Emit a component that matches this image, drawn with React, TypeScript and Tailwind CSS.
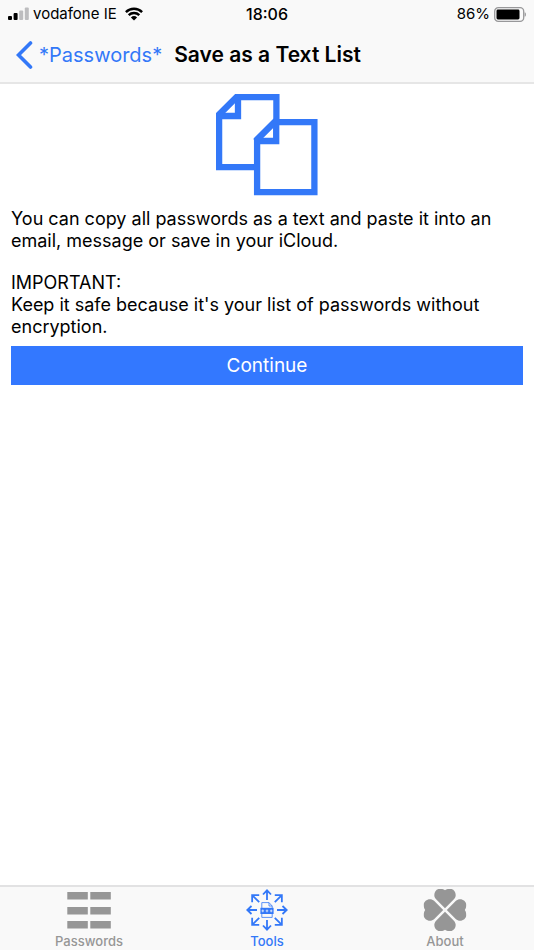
import type { ReactNode } from 'react';

function SignalBars() {
  return (
    <svg width="21" height="14" viewBox="0 0 21 14" aria-hidden>
      <rect x="0" y="9" width="4" height="4" rx="1" fill="#000" />
      <rect x="5.6" y="6" width="4" height="7" rx="1" fill="#000" />
      <rect x="11.2" y="3.5" width="4" height="9.5" rx="1" fill="#bdbdbf" />
      <rect x="16.8" y="0.5" width="4" height="12.5" rx="1" fill="#bdbdbf" />
    </svg>
  );
}

function Wifi() {
  return (
    <svg width="18" height="14" viewBox="0 0 18 14" aria-hidden>
      <g fill="none" stroke="#000" strokeWidth="2.4">
        <path d="M0.9 5.1A11.6 11.6 0 0 1 17.1 5.1" />
        <path d="M3.7 8.1A7.6 7.6 0 0 1 14.3 8.1" />
      </g>
      <path d="M5.9 10.4A4.5 4.5 0 0 1 12.1 10.4L9 13.6Z" fill="#000" />
    </svg>
  );
}

function Battery() {
  return (
    <svg width="32" height="15" viewBox="0 0 32 15" aria-hidden>
      <rect x="0.7" y="0.7" width="29" height="13.6" rx="3.6" fill="none" stroke="#98989a" strokeWidth="1.3" />
      <rect x="2.5" y="2.5" width="23" height="10" rx="1.4" fill="#000" />
      <path d="M30.6 5.2C32.4 5.7 32.4 9.3 30.6 9.8Z" fill="#98989a" />
    </svg>
  );
}

function BackChevron() {
  return (
    <svg width="17" height="28" viewBox="0 0 17 28" aria-hidden>
      <path d="M14.5 2L2.5 14L14.5 26" fill="none" stroke="currentColor" strokeWidth="3.6" strokeLinecap="round" />
    </svg>
  );
}

function CopyPages() {
  return (
    <svg width="102" height="102" viewBox="0 0 102 102" aria-hidden>
      <g fill="#fff" stroke="#3378f8" strokeWidth="6.3">
        <path d="M3.1 20.6L20.6 3.1H60.4V73.1H3.1Z" />
        <path d="M22 3V22H3" />
        <path d="M41.1 45.6L58.6 28.1H98.4V98.1H41.1Z" />
        <path d="M60.2 28V47H41" />
      </g>
      {/* The fold fills cover the inner half of the diagonals, so draw those again */}
      <path d="M1.5 22.2L22.2 1.5M39.5 47.2L60.2 26.5" stroke="#3378f8" strokeWidth="6.3" clipPath="url(#pages)" />
      <clipPath id="pages">
        <path d="M0 19L19 0H64V77H0ZM38 44L57 25H102V102H38Z" />
      </clipPath>
    </svg>
  );
}

function ListIcon() {
  return (
    <svg width="44" height="42" viewBox="0 0 44 42" fill="currentColor" aria-hidden>
      {[3, 18, 32].map((y) => (
        <g key={y}>
          <rect x="0.3" y={y} width="20.5" height="7.5" />
          <rect x="23.3" y={y} width="20.5" height="7.5" />
        </g>
      ))}
    </svg>
  );
}

function ToolsIcon() {
  const turns = [0, 45, 90, 135, 180, 225, 270, 315];

  return (
    <svg width="42" height="42" viewBox="-21 -21 42 42" fill="none" stroke="currentColor" aria-hidden>
      {turns.map((turn) => (
        <path
          key={turn}
          d={turn % 90 === 0 ? 'M0 -10V-19.5M-4 -15.5L0 -19.7L4 -15.5' : 'M0 -11V-21M-5 -16L0 -21L5 -16'}
          strokeWidth="1.8"
          transform={`rotate(${turn})`}
        />
      ))}
      <path d="M-5.2 -2V-7.4H2L5.2 -4V-2M2 -7.4V-4H5.2M-5.2 3V7.4H5.2V3" strokeWidth="0.8" />
      <rect x="-6.6" y="-2.2" width="13.2" height="6.2" fill="currentColor" stroke="none" />
      <path d="M-4.2 -0.5V2.3M-5.5 0.9H-2.9M0 -0.5V2.3M-1.3 0.9H1.3M4.2 -0.5V2.3M2.9 0.9H5.5" stroke="#fff" strokeWidth="0.7" />
    </svg>
  );
}

function CloverIcon() {
  return (
    <svg width="44" height="42" viewBox="-22 -21 44 42" fill="currentColor" aria-hidden>
      {[0, 90, 180, 270].map((turn) => (
        <path
          key={turn}
          d="M0 -1.8L-8.9 -10.7C-12.8 -14.8 -9.8 -21.2 -5.2 -21.2C-2.8 -21.2 -1 -20.7 0 -19.8C1 -20.7 2.8 -21.2 5.2 -21.2C9.8 -21.2 12.8 -14.8 8.9 -10.7Z"
          transform={`rotate(${turn})`}
        />
      ))}
    </svg>
  );
}

interface Tab {
  label: string;
  icon: ReactNode;
  active?: boolean;
}

const tabs: Tab[] = [
  { label: 'Passwords', icon: <ListIcon /> },
  { label: 'Tools', icon: <ToolsIcon />, active: true },
  { label: 'About', icon: <CloverIcon /> },
];

export default function App() {
  return (
    <div className="flex min-h-screen flex-col bg-white font-['Inter',sans-serif] text-black">
      <header className="border-b-2 border-[#e6e6e6] bg-[#f9f9f9]">
        {/* Status bar */}
        <div className="grid h-7 grid-cols-[1fr_auto_1fr] items-center px-2 text-[15px] leading-5">
          <div className="flex items-center gap-1">
            <SignalBars />
            <span>vodafone IE</span>
            <span className="ml-1">
              <Wifi />
            </span>
          </div>
          <span className="text-[16px] font-medium">18:06</span>
          <div className="flex items-center justify-end gap-1">
            <span>86%</span>
            <Battery />
          </div>
        </div>

        <nav className="flex h-[54px] items-center gap-3 px-4">
          <a href="#passwords" className="flex items-center gap-1.5 text-[20px] text-[#3378f8]">
            <BackChevron />
            *Passwords*
          </a>
          <h1 className="text-[21px] font-semibold">Save as a Text List</h1>
        </nav>
      </header>

      <main className="flex flex-1 flex-col px-[11px] pt-[10px]">
        <div className="flex justify-center">
          <CopyPages />
        </div>
        <div className="mt-3 text-[18px] leading-[22px]">
          <p>You can copy all passwords as a text and paste it into an email, message or save in your iCloud.</p>
          <p className="mt-5">
            IMPORTANT:
            <br />
            Keep it safe because it's your list of passwords without encryption.
          </p>
        </div>
        <button type="button" className="mt-2 h-[39px] bg-[#3378ff] text-[19px] leading-[22px] text-white">
          Continue
        </button>
      </main>

      <nav className="grid h-[65px] grid-cols-3 border-t-2 border-[#e2e2e3] bg-[#f9f9f9]">
        {tabs.map(({ label, icon, active }) => (
          <a
            key={label}
            href={`#${label.toLowerCase()}`}
            className={`flex flex-col items-center pt-0.5 text-[13px] leading-5 font-medium ${active ? 'text-[#3378f8]' : 'text-[#969696]'}`}
          >
            {icon}
            {label}
          </a>
        ))}
      </nav>
    </div>
  );
}
